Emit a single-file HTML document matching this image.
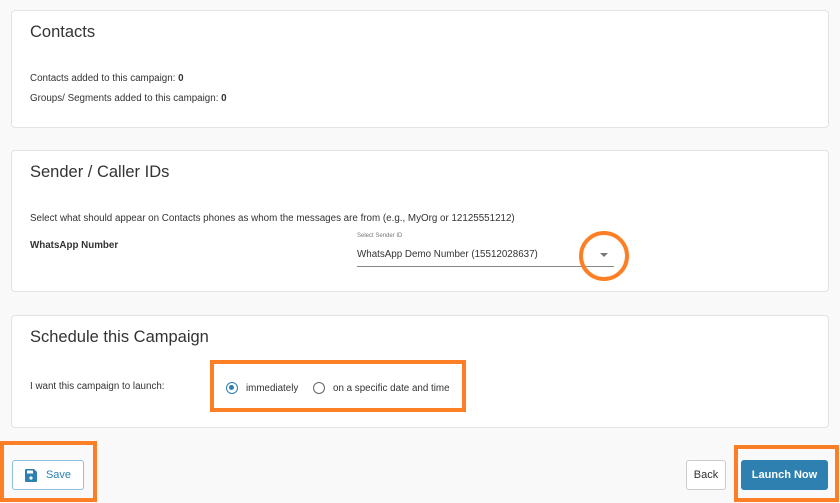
<!DOCTYPE html>
<html><head><style>
*{margin:0;padding:0;box-sizing:border-box}
body{width:840px;height:503px;background:#f9f9f9;font-family:"Liberation Sans",sans-serif;color:#333;position:relative;overflow:hidden}
.card{position:absolute;left:11px;width:818px;background:#fff;border:1px solid #e3e3e3;border-radius:4px}
h2{position:absolute;left:18px;font-weight:300;font-size:16.5px;color:#333}
.t{position:absolute;font-size:9.8px;color:#333;white-space:nowrap}
.ob{position:absolute;border:4px solid #fd7f25}
.btn{position:absolute;top:460px;height:30px;border-radius:3px;font-size:11px;display:flex;align-items:center;justify-content:center}
.radio{position:absolute;width:12px;height:12px;border-radius:50%;border:1.5px solid #666}
</style></head><body>
<div class="card" style="top:10px;height:118px">
<h2 style="top:12px">Contacts</h2>
<div class="t" style="left:18px;top:62px">Contacts added to this campaign: <b>0</b></div>
<div class="t" style="left:18px;top:82px">Groups/ Segments added to this campaign: <b>0</b></div>
</div>
<div class="card" style="top:150px;height:142px">
<h2 style="top:12px">Sender / Caller IDs</h2>
<div class="t" style="left:18px;top:62px">Select what should appear on Contacts phones as whom the messages are from (e.g., MyOrg or 12125551212)</div>
<div class="t" style="left:18px;top:89px;font-weight:bold">WhatsApp Number</div>
<div class="t" style="left:345px;top:82px;font-size:6px;color:#777">Select Sender ID</div>
<div class="t" style="left:345px;top:98px">WhatsApp Demo Number (15512028637)</div>
<div style="position:absolute;left:345px;top:115px;width:257px;border-top:1px solid #888"></div>
<div style="position:absolute;left:588px;top:102px;border-left:4px solid transparent;border-right:4px solid transparent;border-top:4px solid #777"></div>
</div>
<div class="card" style="top:315px;height:113px">
<h2 style="top:12px">Schedule this Campaign</h2>
<div class="t" style="left:18px;top:65px">I want this campaign to launch:</div>
</div>
<div style="position:absolute;left:579px;top:231px;width:50px;height:50px;border:4px solid #fd7f25;border-radius:50%"></div>
<div class="ob" style="left:210px;top:360px;width:256px;height:52px"></div>
<div class="radio" style="left:226px;top:382px;border-color:#2e80b0"><div style="position:absolute;left:2px;top:2px;width:5px;height:5px;border-radius:50%;background:#2e80b0"></div></div>
<div class="t" style="left:246px;top:383px">immediately</div>
<div class="radio" style="left:313px;top:382px"></div>
<div class="t" style="left:333px;top:383px">on a specific date and time</div>
<div class="ob" style="left:0;top:441px;width:97px;height:61px"></div>
<div class="btn" style="left:12px;width:72px;border:1px solid #8fbfdd;background:#fff;color:#2e80b0"><svg width="12" height="13" viewBox="0 0 12 13" style="margin-right:9px"><path d="M0 1a1 1 0 011-1h8l3 3v9a1 1 0 01-1 1H1a1 1 0 01-1-1z" fill="#2e80b0"/><rect x="2" y="1.5" width="6" height="3" fill="#fff"/><circle cx="6" cy="9" r="1.6" fill="#fff"/></svg>Save</div>
<div class="btn" style="left:686px;width:40px;border:1px solid #ccc;background:#fff;color:#333">Back</div>
<div class="ob" style="left:734px;top:445px;width:105px;height:57px"></div>
<div class="btn" style="left:741px;width:87px;background:#2e80b0;color:#fff;font-weight:bold">Launch Now</div>
</body></html>
